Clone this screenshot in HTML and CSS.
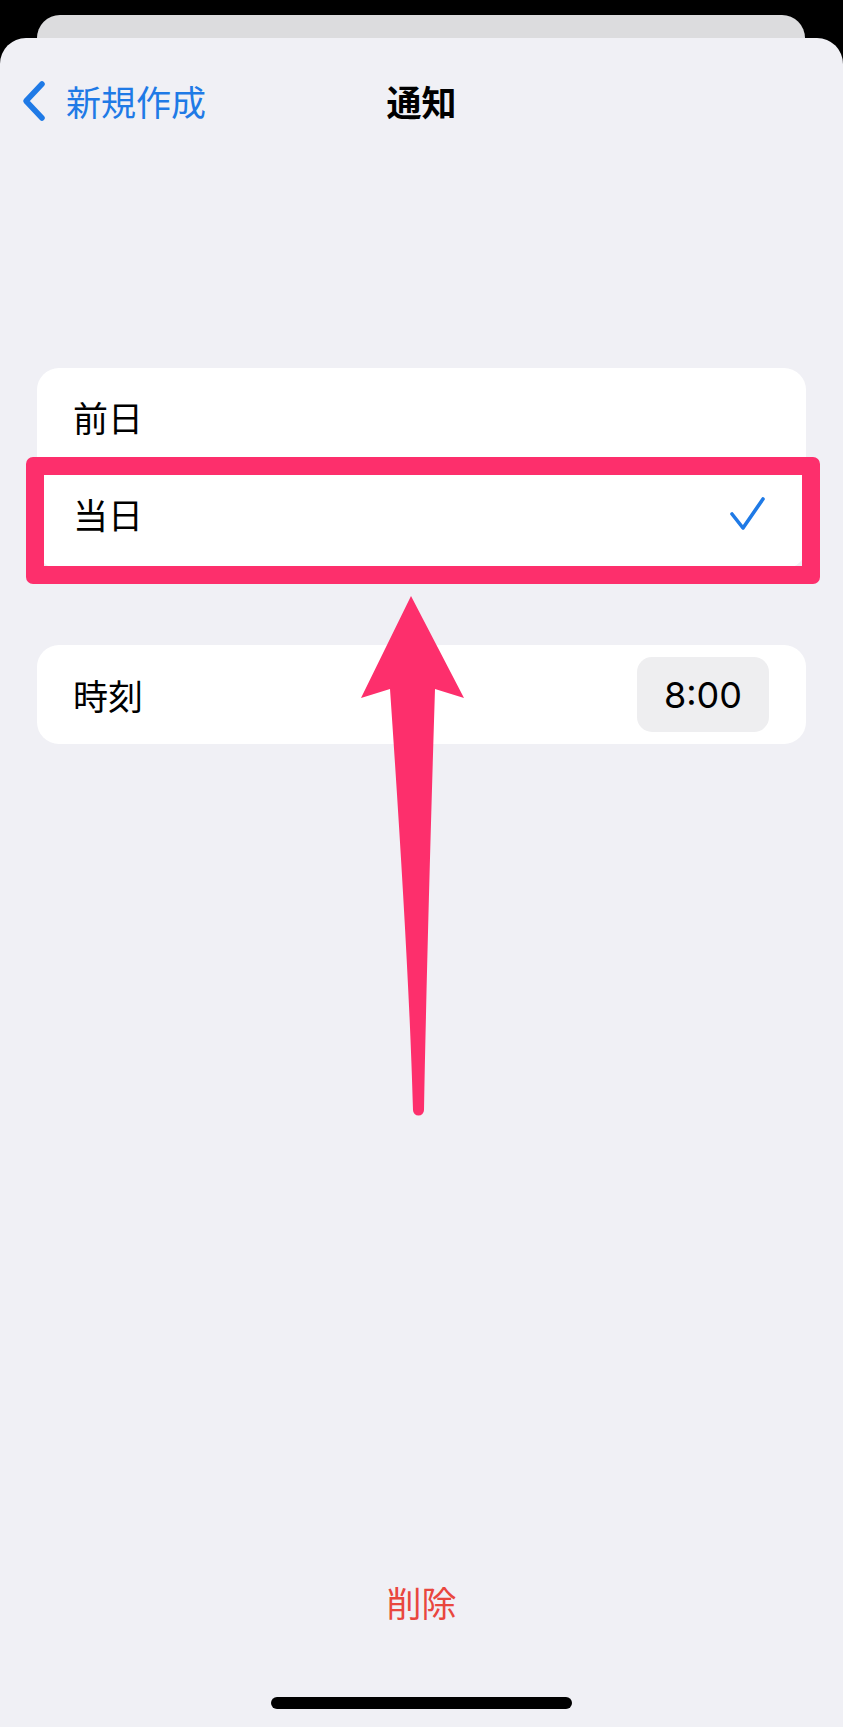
FILE: index.html
```html
<!DOCTYPE html>
<html lang="ja">
<head>
  <meta charset="UTF-8">
  <title>通知</title>
  <link rel="stylesheet" href="styles.css">
</head>
<body>
<div class="screen">
  <div class="back-card"></div>
  <div class="sheet">
    <div class="nav">
      <a class="nav-back" href="#">
        <svg class="chevron" width="28" height="42" viewBox="0 0 28 42">
          <path d="M22 4 L6 21 L22 38" fill="none" stroke="#1f7ae6" stroke-width="5.5" stroke-linecap="round" stroke-linejoin="round"/>
        </svg>
        <span>新規作成</span>
      </a>
      <div class="nav-title">通知</div>
      <div></div>
    </div>

    <div class="group">
      <div class="row">前日</div>
      <div class="row row-last">
        <span>当日</span>
        <svg class="check" width="36" height="34" viewBox="0 0 36 34">
          <path d="M2 17 L13 31 L33 2" fill="none" stroke="#1f7ae6" stroke-width="3.6" stroke-linecap="round" stroke-linejoin="round"/>
        </svg>
      </div>
      <!-- 注目枠 -->
      <div class="mark"></div>
    </div>

    <div class="group group-time">
      <div class="row row-time">
        <span>時刻</span>
        <span class="time">8:00</span>
      </div>
    </div>

    <div class="delete">削除</div>
    <div class="home-bar"></div>
  </div>

  <!-- 矢印 -->
  <svg class="arrow" width="843" height="1727" viewBox="0 0 843 1727">
    <path d="M411 596 L464 698 L435 689 C430 850 426 1000 424 1110 A5.5 5.5 0 0 1 413 1110 C410 1000 401 850 390 689 L361 698 Z" fill="#fd2f6c"/>
  </svg>
</div>
</body>
</html>
```
FILE: styles.css
```css
* {
  margin: 0;
  padding: 0;
  box-sizing: border-box;
}

body {
  background-color: #000;
  font-family: "Noto Sans CJK JP", "Noto Sans", sans-serif;
  color: #000;
}

.screen {
  width: 843px;
  height: 1727px;
  padding-top: 15px;
  position: relative;
  overflow: hidden;
}

.back-card {
  height: 23px;
  margin: 0 38px 0 37px;
  background-color: #dcdcde;
  border-radius: 24px 24px 0 0;
}

.sheet {
  height: 1689px;
  background-color: #f0f0f5;
  border-radius: 26px 26px 0 0;
  display: flex;
  flex-direction: column;
}

.nav {
  display: grid;
  grid-template-columns: 1fr auto 1fr;
  align-items: center;
  padding-top: 40px;
  height: 86px;
}

.nav-back {
  display: flex;
  align-items: center;
  gap: 18px;
  padding-left: 20px;
  color: #1f7ae6;
  text-decoration: none;
  font-size: 35px;
  line-height: 46px;
}

.chevron {
  display: block;
}

.nav-title {
  font-size: 35px;
  font-weight: 700;
  line-height: 46px;
}

.group {
  position: relative;
  margin: 244px 37px 0 37px;
  background-color: #fff;
  border-radius: 22px;
}

.row {
  height: 97px;
  padding: 0 40px 0 36px;
  display: flex;
  align-items: center;
  justify-content: space-between;
  font-size: 35px;
}

.row-last {
  height: 104px;
  padding-bottom: 7px;
}

.check {
  display: block;
}

.mark {
  position: absolute;
  top: 89px;
  left: -11px;
  right: -14px;
  height: 127px;
  border: 18px solid #fd2f6c;
  border-radius: 7px;
}

.group-time {
  margin-top: 76px;
}

.row-time {
  height: 99px;
  padding-right: 37px;
}

.time {
  width: 132px;
  height: 75px;
  border-radius: 15px;
  background-color: #eeeef0;
  font-family: Inter, "Noto Sans", sans-serif;
  font-size: 36px;
  display: flex;
  align-items: center;
  justify-content: center;
}

.delete {
  margin-top: auto;
  text-align: center;
  color: #e9473e;
  font-size: 35px;
  line-height: 46px;
}

.home-bar {
  width: 301px;
  height: 12px;
  margin: 72px auto 18px auto;
  background-color: #000;
  border-radius: 6px;
}

.arrow {
  position: absolute;
  top: 0;
  left: 0;
  pointer-events: none;
}
```
